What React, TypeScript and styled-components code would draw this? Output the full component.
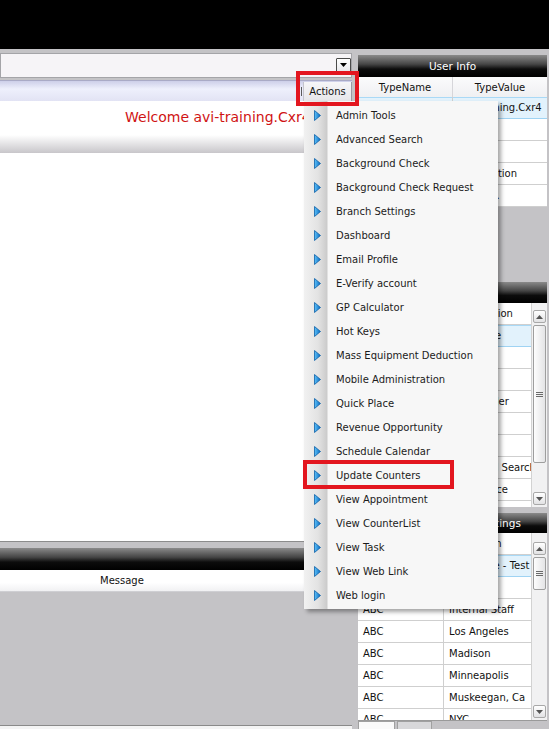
import React from "react";
import styled, { createGlobalStyle, css } from "styled-components";

const GlobalStyle = createGlobalStyle`
  html, body {
    margin: 0;
    padding: 0;
    background: #c4c3c6;
  }
  body {
    font-family: "DejaVu Sans", "Liberation Sans", sans-serif;
    font-size: 10px;
    color: #111;
  }
  *, *::before, *::after {
    box-sizing: border-box;
  }
`;

const Screen = styled.div`
  position: relative;
  width: 549px;
  height: 729px;
  overflow: hidden;
  display: flex;
  flex-direction: column;
  background: #c4c3c6;
`;

const TitleBar = styled.div`
  flex: none;
  height: 49px;
  background: #000;
`;

const Workspace = styled.div`
  flex: 1;
  min-height: 0;
  display: flex;
  gap: 6px;
`;

/* ---------- left side ---------- */

const LeftColumn = styled.div`
  width: 352px;
  flex: none;
  display: flex;
  flex-direction: column;
  padding-top: 4px;
`;

const ComboBox = styled.div`
  flex: none;
  height: 25px;
  display: flex;
  justify-content: flex-end;
  align-items: flex-start;
  padding-top: 4px;
  background: #f6f4f7;
  border: 1px solid #a4a4a8;
`;

const DropButton = styled.div`
  width: 15px;
  height: 14px;
  display: flex;
  align-items: center;
  justify-content: center;
  background: linear-gradient(#ffffff, #e8e8ec);
  border: 1px solid #4a4a4a;
  border-radius: 1px;
`;

const ActionStrip = styled.div`
  flex: none;
  margin-top: 2px;
  height: 21px;
  display: flex;
  justify-content: flex-end;
  align-items: flex-end;
  background: linear-gradient(#cdcfe9 0%, #eef0fc 40%, #e2e3f4 100%);
  border-top: 1px solid #a9aac6;
`;

const ActionsButton = styled.div<{ $highlight?: boolean }>`
  position: relative;
  width: 49px;
  height: 19px;
  display: flex;
  align-items: center;
  justify-content: center;
  background: linear-gradient(#f6f6f8, #e6e6ea);
  border-left: 1px solid #c4c4cc;
  border-right: 1px solid #9a9aa4;
  color: #111;

  &::before {
    content: "";
    position: absolute;
    left: -3px;
    top: 5px;
    width: 1px;
    height: 9px;
    background: #5a5a5a;
  }

  ${({ $highlight }) =>
    $highlight &&
    css`
      &::after {
        content: "";
        position: absolute;
        left: -8px;
        top: -11px;
        width: 63px;
        height: 35px;
        border: 4px solid #e3161f;
        z-index: 10;
      }
    `}
`;

const ContentPane = styled.div`
  flex: 1;
  display: flex;
  flex-direction: column;
  background: #fff;
`;

const Welcome = styled.div`
  margin-top: 8px;
  padding-left: 125px;
  font-size: 14px;
  line-height: 17px;
  color: #d01414;
  white-space: nowrap;
`;

const ShadeBand = styled.div`
  margin-top: 9px;
  height: 18px;
  background: linear-gradient(#ffffff, #c8c6ca);
`;

const MessagePanel = styled.div`
  flex: none;
  height: 188px;
  display: flex;
  flex-direction: column;
  border-top: 1px solid #8c8c8c;
  padding-top: 6px;
`;

const DarkBar = styled.div<{ $h: number }>`
  flex: none;
  height: ${({ $h }) => $h}px;
  display: flex;
  align-items: center;
  justify-content: center;
  background: linear-gradient(#8a8a8a 0%, #454545 42%, #0c0c0c 64%, #000 100%);
  color: #fff;
  font-size: 10.5px;
  white-space: nowrap;
  overflow: hidden;
`;

const MessageHeader = styled.div`
  flex: none;
  height: 22px;
  padding-left: 100px;
  display: flex;
  align-items: center;
  background: linear-gradient(#ffffff 60%, #f1f1f3);
  border-bottom: 1px solid #cfcfd3;
`;

const MessageBody = styled.div`
  flex: 1;
  background: #c4c3c6;
  border-bottom: 1px solid #8a8a8a;
`;

const MessageFoot = styled.div`
  flex: none;
  height: 3px;
  background: #f4f4f4;
`;

/* ---------- right side ---------- */

const RightColumn = styled.div`
  width: 189px;
  flex: none;
  display: flex;
  flex-direction: column;
  padding-top: 6px;
`;

const Panel = styled.section<{ $h: number; $gap?: number }>`
  flex: none;
  height: ${({ $h }) => $h}px;
  margin-bottom: ${({ $gap }) => $gap ?? 0}px;
  display: flex;
  flex-direction: column;
  overflow: hidden;
`;

const ColumnHeader = styled.div`
  flex: none;
  height: 20px;
  display: grid;
  grid-template-columns: 95px 94px;
  background: linear-gradient(#fbfbfc, #eff0f2);
`;

const HeaderCell = styled.div`
  display: flex;
  align-items: center;
  justify-content: center;
  border-right: 1px solid #d6d6da;
  &:last-child {
    border-right: none;
  }
`;

const GridRow = styled.div<{ $cols: string; $selected?: boolean }>`
  flex: none;
  height: 22px;
  display: grid;
  grid-template-columns: ${({ $cols }) => $cols};
  background: ${({ $selected }) => ($selected ? "#e2f2fc" : "#fff")};
  border-bottom: 1px solid ${({ $selected }) => ($selected ? "#9fd3f3" : "#cfcfcf")};
  ${({ $selected }) =>
    $selected &&
    css`
      box-shadow: inset 0 1px 0 #a9d9f6;
    `}
`;

const Cell = styled.div`
  padding-left: 5px;
  line-height: 21px;
  white-space: nowrap;
  overflow: hidden;
  border-right: 1px solid #cfcfcf;
  &:last-child {
    border-right: none;
  }
`;

const EmptyArea = styled.div`
  flex: 1;
  background: #c4c3c6;
`;

const GridBody = styled.div`
  flex: 1;
  min-height: 0;
  display: flex;
`;

const Rows = styled.div`
  flex: 1;
  min-width: 0;
  display: flex;
  flex-direction: column;
  overflow: hidden;
  background: #fff;
`;

const ScrollBar = styled.div<{ $padTop: number }>`
  width: 16px;
  flex: none;
  display: flex;
  flex-direction: column;
  gap: 2px;
  padding: ${({ $padTop }) => $padTop}px 1px 2px 1px;
  background: #f1f1f2;
  border-left: 1px solid #d2d2d2;
`;

const ScrollButton = styled.div`
  flex: none;
  height: 13px;
  display: flex;
  align-items: center;
  justify-content: center;
  border: 1px solid #a8a8a8;
  border-radius: 2px;
  background: linear-gradient(#ffffff, #e2e2e4);
`;

const Thumb = styled.div<{ $size: number }>`
  flex: none;
  height: ${({ $size }) => $size}px;
  display: flex;
  align-items: center;
  justify-content: center;
  border: 1px solid #9e9e9e;
  border-radius: 2px;
  background: linear-gradient(to right, #fdfdfd, #e4e4e6);
`;

const Grip = styled.div`
  width: 7px;
  height: 5px;
  background: repeating-linear-gradient(#6a6a6a 0 1px, transparent 1px 2px);
`;

const TrackFill = styled.div`
  flex: 1;
`;

const Pager = styled.div`
  flex: none;
  height: 9px;
  display: flex;
  gap: 2px;
  background: #c4c3c6;
  border-top: 1px solid #9a9a9a;
`;

const PagerBox = styled.div<{ $w: number; $light?: boolean }>`
  width: ${({ $w }) => $w}px;
  background: ${({ $light }) => ($light ? "#fafafa" : "#d8d8da")};
  border: 1px solid #a0a0a0;
  border-bottom: none;
`;

/* ---------- actions menu ---------- */

const Menu = styled.ul`
  position: absolute;
  left: 304px;
  top: 101px;
  width: 194px;
  margin: 0;
  padding: 2px 0;
  list-style: none;
  z-index: 5;
  background: linear-gradient(
    to right,
    #f1f1f1 0px,
    #e3e3e3 14px,
    #cbcbcb 23px,
    #f7f7f7 24px
  );
  box-shadow: 3px 3px 4px rgba(0, 0, 0, 0.35);
`;

const MenuItem = styled.li<{ $highlight?: boolean }>`
  position: relative;
  height: 24px;
  display: flex;
  align-items: center;
  padding-left: 10px;
  color: #1b1b1b;
  white-space: nowrap;

  ${({ $highlight }) =>
    $highlight &&
    css`
      &::after {
        content: "";
        position: absolute;
        left: -1px;
        top: -3px;
        width: 151px;
        height: 29px;
        border: 4px solid #e3161f;
        z-index: 10;
      }
    `}
`;

const MenuLabel = styled.span`
  margin-left: 15px;
`;

const MenuArrow = () => (
  <svg width="7" height="11" viewBox="0 0 7 11">
    <defs>
      <linearGradient id="arrowFill" x1="0" y1="0" x2="1" y2="0">
        <stop offset="0" stopColor="#5cc0f8" />
        <stop offset="1" stopColor="#0a6cc4" />
      </linearGradient>
    </defs>
    <polygon points="0.5,0.5 6.5,5.5 0.5,10.5" fill="url(#arrowFill)" stroke="#0d5fa6" strokeWidth="0.8" />
  </svg>
);

const DownTriangle = ({ color = "#000" }: { color?: string }) => (
  <svg width="7" height="4" viewBox="0 0 7 4">
    <polygon points="0,0 7,0 3.5,4" fill={color} />
  </svg>
);

const UpTriangle = ({ color = "#555" }: { color?: string }) => (
  <svg width="7" height="4" viewBox="0 0 7 4">
    <polygon points="0,4 7,4 3.5,0" fill={color} />
  </svg>
);

/* ---------- data ---------- */

const menuItems = [
  "Admin Tools",
  "Advanced Search",
  "Background Check",
  "Background Check Request",
  "Branch Settings",
  "Dashboard",
  "Email Profile",
  "E-Verify account",
  "GP Calculator",
  "Hot Keys",
  "Mass Equipment Deduction",
  "Mobile Administration",
  "Quick Place",
  "Revenue Opportunity",
  "Schedule Calendar",
  "Update Counters",
  "View Appointment",
  "View CounterList",
  "View Task",
  "View Web Link",
  "Web login",
];

const userInfo = [
  ["UserName", "avi-training.Cxr4"],
  ["FirstName", "Avi"],
  ["LastName", "User"],
  ["Division", "Corporation"],
  ["Company", "ABC Inc."],
];

// only the tail of the second column peeks out from under the menu
const quickLinks = [
  "Organization",
  "Workplace",
  "Jobs",
  "Leads",
  "Quick Order",
  "Notes",
  "Tasks",
  "Advanced Search",
  "Compliance",
  "Reports",
];

const branches = [
  ["ABC", "Fort Worth"],
  ["ABC", "Greenville - Test"],
  ["ABC", "Hilo"],
  ["ABC", "Internal Staff"],
  ["ABC", "Los Angeles"],
  ["ABC", "Madison"],
  ["ABC", "Minneapolis"],
  ["ABC", "Muskeegan, Ca"],
  ["ABC", "NYC"],
];

const gridCols = "86px 87px";

const VerticalScroll = ({ padTop, thumb }: { padTop: number; thumb: number }) => (
  <ScrollBar $padTop={padTop}>
    <ScrollButton>
      <UpTriangle />
    </ScrollButton>
    <Thumb $size={thumb}>
      <Grip />
    </Thumb>
    <TrackFill />
    <ScrollButton>
      <DownTriangle color="#555" />
    </ScrollButton>
  </ScrollBar>
);

export default function App() {
  return (
    <>
      <GlobalStyle />
      <Screen>
        <TitleBar />
        <Workspace>
          <LeftColumn>
            <ComboBox>
              <DropButton>
                <DownTriangle />
              </DropButton>
            </ComboBox>
            <ActionStrip>
              <ActionsButton $highlight>Actions</ActionsButton>
            </ActionStrip>
            <ContentPane>
              <Welcome>Welcome avi-training.Cxr4</Welcome>
              <ShadeBand />
            </ContentPane>
            <MessagePanel>
              <DarkBar $h={22} />
              <MessageHeader>Message</MessageHeader>
              <MessageBody />
              <MessageFoot />
            </MessagePanel>
          </LeftColumn>

          <RightColumn>
            <Panel $h={225} $gap={2}>
              <DarkBar $h={22}>User Info</DarkBar>
              <ColumnHeader>
                <HeaderCell>TypeName</HeaderCell>
                <HeaderCell>TypeValue</HeaderCell>
              </ColumnHeader>
              {userInfo.map(([name, value], i) => (
                <GridRow key={name} $cols="95px 94px" $selected={i === 0}>
                  <Cell>{name}</Cell>
                  <Cell>{value}</Cell>
                </GridRow>
              ))}
              <EmptyArea />
            </Panel>

            <Panel $h={225} $gap={6}>
              <DarkBar $h={21}>Quick Links</DarkBar>
              <GridBody>
                <Rows>
                  {quickLinks.map((label, i) => (
                    <GridRow key={label} $cols={gridCols} $selected={i === 1}>
                      <Cell />
                      <Cell>{label}</Cell>
                    </GridRow>
                  ))}
                </Rows>
                <VerticalScroll padTop={7} thumb={138} />
              </GridBody>
            </Panel>

            <Panel $h={216}>
              <DarkBar $h={20}>Company Branch Settings</DarkBar>
              <GridBody>
                <Rows>
                  {branches.map(([a, b], i) => (
                    <GridRow key={b} $cols={gridCols} $selected={i === 1}>
                      <Cell>{a}</Cell>
                      <Cell>{b}</Cell>
                    </GridRow>
                  ))}
                </Rows>
                <VerticalScroll padTop={9} thumb={33} />
              </GridBody>
              <Pager>
                <PagerBox $w={37} $light />
                <PagerBox $w={35} />
              </Pager>
            </Panel>
          </RightColumn>
        </Workspace>

        <Menu>
          {menuItems.map((label) => (
            <MenuItem key={label} $highlight={label === "Update Counters"}>
              <MenuArrow />
              <MenuLabel>{label}</MenuLabel>
            </MenuItem>
          ))}
        </Menu>
      </Screen>
    </>
  );
}
